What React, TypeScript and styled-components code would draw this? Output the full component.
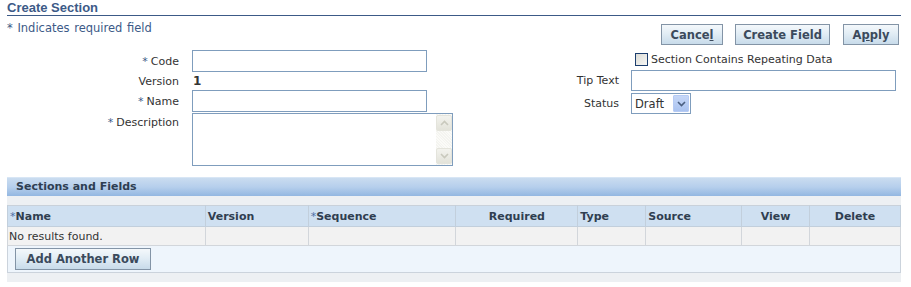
import React from "react";
import styled, { createGlobalStyle } from "styled-components";

const Global = createGlobalStyle`
  html, body { margin: 0; padding: 0; background: #ffffff; }
  body {
    font-family: "DejaVu Sans", Verdana, sans-serif;
    font-size: 11px;
    color: #333333;
  }
  * { box-sizing: border-box; }
`;

const Page = styled.div`
  width: 911px;
  padding: 0 10px 0 7px;
`;

const Title = styled.h1`
  margin: 0;
  font-family: "Liberation Sans", Arial, sans-serif;
  font-size: 13px;
  font-weight: bold;
  line-height: 15px;
  color: #3c5a87;
  border-bottom: 1px solid #3c5a87;
`;

const TopBar = styled.div`
  display: flex;
  justify-content: space-between;
  align-items: flex-start;
`;

const RequiredNote = styled.div`
  padding-top: 5px;
  line-height: 14px;
  font-size: 11.5px;
  color: #3c5a87;
  word-spacing: 1px;
`;

const Buttons = styled.div`
  display: flex;
  gap: 12px;
  margin-top: 8px;
  margin-right: 2px;
`;

const Button = styled.button<{ $w: number; $h?: number }>`
  width: ${(p) => p.$w}px;
  height: ${(p) => p.$h ?? 21}px;
  padding: 0;
  border: 1px solid #8394a6;
  background: linear-gradient(#f4f8fb 0%, #e2edf5 45%, #c8dbea 100%);
  font-family: "DejaVu Sans", Verdana, sans-serif;
  font-size: 11.5px;
  font-weight: bold;
  color: #3b4a5c;
  cursor: pointer;
  u { text-decoration: underline; }
`;

const Form = styled.div`
  display: flex;
  margin-top: 5px;
`;

const LeftGrid = styled.div`
  display: grid;
  grid-template-columns: 172px 261px;
  column-gap: 13px;
  row-gap: 0;
  align-items: center;
`;

const RightGrid = styled.div`
  display: grid;
  grid-template-columns: 166px 265px;
  column-gap: 12px;
  row-gap: 2px;
  align-items: center;
  align-content: start;
  padding-top: 1px;
`;

const Label = styled.label<{ $top?: boolean }>`
  text-align: right;
  line-height: 14px;
  padding-top: 1px;
  white-space: nowrap;
  ${(p) => (p.$top ? "align-self: start; padding-top: 4px;" : "")}
`;

const Star = styled.span`
  color: #3c5a87;
  margin-right: 3px;
`;

const TextInput = styled.input<{ $w: number; $h?: number }>`
  display: block;
  width: ${(p) => p.$w}px;
  height: ${(p) => p.$h ?? 22}px;
  border: 1px solid #7f9dbd;
  background: #fff;
  padding: 0 3px;
  font-family: inherit;
  font-size: 11px;
  outline: none;
`;

const ValueText = styled.div`
  height: 18px;
  line-height: 19px;
  font-weight: bold;
  font-size: 12px;
  padding-left: 1px;
`;

const TextAreaBox = styled.div`
  display: flex;
  width: 261px;
  height: 53px;
  margin-top: 1px;
  border: 1px solid #7f9dbd;
  background: #fff;
`;

const TextArea = styled.textarea`
  flex: 1;
  border: none;
  resize: none;
  outline: none;
  font-family: inherit;
  font-size: 11px;
  padding: 2px 3px;
`;

const ScrollBar = styled.div`
  width: 16px;
  display: flex;
  flex-direction: column;
  justify-content: space-between;
  padding: 1px 0;
  background: repeating-linear-gradient(45deg, #f4f4f0 0 1px, #fbfbf8 1px 2px);
`;

const ScrollBtn = styled.div`
  width: 16px;
  height: 16px;
  display: flex;
  align-items: center;
  justify-content: center;
  background: linear-gradient(#f3f3ee, #e3e3da);
  border: 1px solid #e4e4dc;
  border-radius: 2px;
`;

const CheckRow = styled.div`
  grid-column: 2;
  display: flex;
  align-items: center;
  gap: 3px;
  padding-left: 4px;
  height: 17px;
`;

const CheckBox = styled.span`
  width: 13px;
  height: 13px;
  border: 1px solid #1c3e6e;
  background: linear-gradient(135deg, #dcdcd6, #f6f6f4);
`;

const SelectBox = styled.div`
  display: flex;
  align-items: center;
  width: 60px;
  height: 21px;
  border: 1px solid #7f9dbd;
  background: #fff;
  padding: 1px;
  justify-content: space-between;
`;

const SelectText = styled.span`
  padding-left: 2px;
  font-size: 11.5px;
`;

const SelectArrow = styled.span`
  width: 16px;
  height: 17px;
  display: flex;
  align-items: center;
  justify-content: center;
  background: linear-gradient(#c6d7f7, #aac3f0);
  border: 1px solid #b6cbf4;
  border-radius: 1px;
`;

const Panel = styled.div`
  margin-top: 11px;
`;

const PanelHeader = styled.div`
  height: 19px;
  line-height: 18px;
  padding-left: 9px;
  font-weight: bold;
  color: #2e3e52;
  background: linear-gradient(#cadcf0 0%, #b6cfec 50%, #93b7e1 100%);
  border-top: 1px solid #d8e6f5;
`;

const Band = styled.div<{ $h: number }>`
  height: ${(p) => p.$h}px;
  background: #edf0f3;
`;

const Table = styled.table`
  width: 100%;
  border-collapse: collapse;
  border: 1px solid #c9d1da;
`;

const Th = styled.th<{ $w: number; $align?: string }>`
  width: ${(p) => p.$w}px;
  height: 21px;
  padding: 0 2px;
  text-align: ${(p) => p.$align || "left"};
  font-weight: bold;
  color: #2f3e50;
  background: #cfe0f1;
  border: 1px solid #c2cfdc;
  border-top: none;
  white-space: nowrap;
`;

const Td = styled.td`
  height: 19px;
  padding: 0 1px;
  background: #f2f2f2;
  border: 1px solid #d2d6db;
  color: #333;
  white-space: nowrap;
`;

const ActionCell = styled.td`
  height: 27px;
  padding: 0 0 0 7px;
  background: #eef5fc;
  border: 1px solid #cbd3dc;
`;

const HeadStar = styled.span`
  color: #4a6fa5;
  font-weight: normal;
`;

const Chevron = ({ up, color }: { up?: boolean; color: string }) => (
  <svg width="9" height="6" viewBox="0 0 9 6">
    <path
      d={up ? "M1 5 L4.5 1.5 L8 5" : "M1 1 L4.5 4.5 L8 1"}
      fill="none"
      stroke={color}
      strokeWidth="1.6"
    />
  </svg>
);

const columns: { label: string; w: number; req?: boolean; align?: string }[] = [
  { label: "Name", w: 198, req: true },
  { label: "Version", w: 103 },
  { label: "Sequence", w: 148, req: true },
  { label: "Required", w: 122, align: "center" },
  { label: "Type", w: 68 },
  { label: "Source", w: 96 },
  { label: "View", w: 68, align: "center" },
  { label: "Delete", w: 91, align: "center" },
];

export default function App() {
  return (
    <Page>
      <Global />
      <Title>Create Section</Title>
      <TopBar>
        <RequiredNote>* Indicates required field</RequiredNote>
        <Buttons>
          <Button $w={62}>
            Cance<u>l</u>
          </Button>
          <Button $w={95}>Create Field</Button>
          <Button $w={56} style={{ marginLeft: 1 }}>
            A<u>p</u>ply
          </Button>
        </Buttons>
      </TopBar>
      <Form>
        <LeftGrid>
          <Label>
            <Star>*</Star>Code
          </Label>
          <TextInput $w={235} />
          <Label>Version</Label>
          <ValueText>1</ValueText>
          <Label>
            <Star>*</Star>Name
          </Label>
          <TextInput $w={235} />
          <Label $top>
            <Star>*</Star>Description
          </Label>
          <TextAreaBox>
            <TextArea />
            <ScrollBar>
              <ScrollBtn>
                <Chevron up color="#c9c9bd" />
              </ScrollBtn>
              <ScrollBtn>
                <Chevron color="#c9c9bd" />
              </ScrollBtn>
            </ScrollBar>
          </TextAreaBox>
        </LeftGrid>
        <RightGrid>
          <CheckRow>
            <CheckBox />
            <span>Section Contains Repeating Data</span>
          </CheckRow>
          <Label>Tip Text</Label>
          <TextInput $w={265} $h={21} />
          <Label>Status</Label>
          <SelectBox>
            <SelectText>Draft</SelectText>
            <SelectArrow>
              <Chevron color="#4a5f80" />
            </SelectArrow>
          </SelectBox>
        </RightGrid>
      </Form>
      <Panel>
        <PanelHeader>Sections and Fields</PanelHeader>
        <Band $h={9} />
        <Table>
          <thead>
            <tr>
              {columns.map((c) => (
                <Th key={c.label} $w={c.w} $align={c.align}>
                  {c.req && <HeadStar>*</HeadStar>}
                  {c.label}
                </Th>
              ))}
            </tr>
          </thead>
          <tbody>
            <tr>
              <Td>No results found.</Td>
              {columns.slice(1).map((c) => (
                <Td key={c.label} />
              ))}
            </tr>
            <tr>
              <ActionCell colSpan={columns.length}>
                <Button $w={136} $h={22}>Add Another Row</Button>
              </ActionCell>
            </tr>
          </tbody>
        </Table>
        <Band $h={9} />
      </Panel>
    </Page>
  );
}
